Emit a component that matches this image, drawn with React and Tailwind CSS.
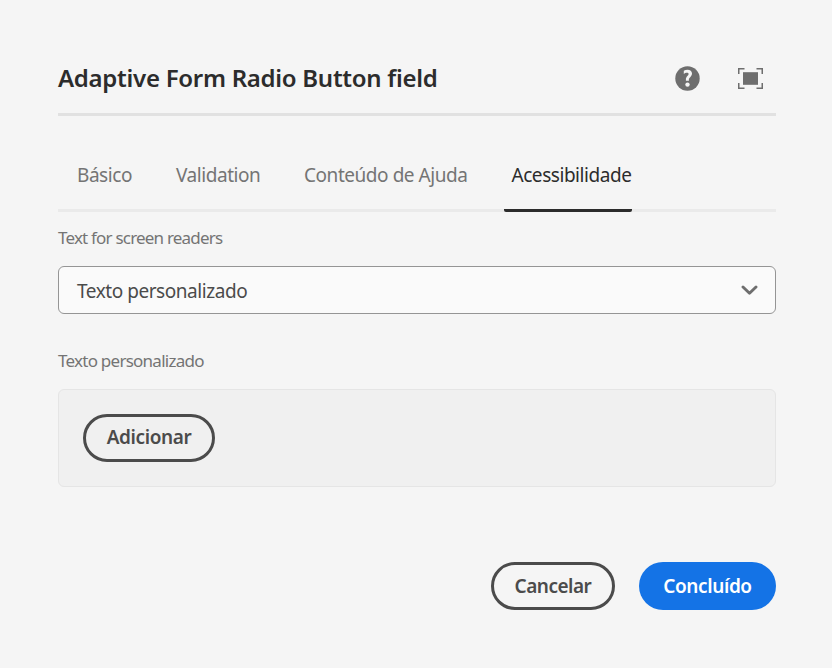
function HelpIcon() {
  return (
    <svg width="25" height="25" viewBox="0 0 25 25" aria-hidden="true">
      <circle cx="12.5" cy="12.5" r="12.2" fill="#6e6e6e" />
      <path d="M8.8 8V4.8C9.9 4.1 11.1 3.8 12.5 3.8C15.2 3.8 17 5.3 17 7.6C17 9.2 16.2 10.3 15 11.5C14.1 12.4 13.8 12.9 13.9 13.8V14.7H10.9V13.6C10.8 12.2 11.4 11.2 12.4 10.1C13.2 9.3 13.6 8.8 13.6 8.1C13.6 7.3 13 6.8 11.9 6.8C10.7 6.8 9.6 7.3 8.8 8Z" fill="#f5f5f5" />
      <circle cx="12.5" cy="18.6" r="2.2" fill="#f5f5f5" />
    </svg>
  );
}

function FullscreenIcon() {
  return (
    <svg width="25" height="21" viewBox="0 0 25 21" fill="none" aria-hidden="true">
      <path d="M6.5 .75H.75V6M18.5 .75H24.25V6M.75 15V20.25H6.5M24.25 15V20.25H18.5" stroke="#6e6e6e" strokeWidth="1.5" />
      <rect x="5" y="4.2" width="15" height="12.6" fill="#6e6e6e" />
    </svg>
  );
}

export default function App() {
  return (
    <main className="flex h-[668px] w-[832px] flex-col bg-[#f5f5f5] pr-[56px] pl-[58px] font-['Noto_Sans',sans-serif] text-[#4b4b4b] whitespace-nowrap">
      <header className="flex h-[116px] shrink-0 items-start justify-between border-b-3 border-[#e1e1e1]">
        <h1 className="mt-[62px] text-[24px] leading-[32px] font-semibold tracking-[-0.28px] text-[#2c2c2c]">Adaptive Form Radio Button field</h1>
        <div className="mt-[66px] mr-[13px] flex items-center gap-[38px]">
          <HelpIcon />
          <FullscreenIcon />
        </div>
      </header>
      <nav className="flex h-[96px] shrink-0 border-b-3 border-[#eaeaea] pt-[43px] pl-[19px] text-[19px] leading-[32px] tracking-[-0.45px] text-[#747474]">
        <div className="w-[99px]">Básico</div>
        <div className="w-[128px]">Validation</div>
        <div className="w-[199.5px]">Conteúdo de Ajuda</div>
        <div className="h-[53px] w-[128px] rounded-[2px] border-b-3 border-[#2c2c2c] pl-[8px] text-[#2c2c2c]">Acessibilidade</div>
      </nav>
      <label className="mt-[14px] text-[17px] leading-[24px] tracking-[-0.8px] text-[#747474]">Text for screen readers</label>
      <button className="mt-[16px] flex h-[48px] shrink-0 items-center justify-between rounded-[6px] border border-[#959595] bg-[#fafafa] pr-[17px] pl-[18px] text-[19px] tracking-[-0.45px]">
        <span className="pt-[2px]">Texto personalizado</span>
        <svg width="17" height="10" viewBox="0 0 17 10" fill="none" aria-hidden="true">
          <path d="M2 2L8.5 8.3L15 2" stroke="#6e6e6e" strokeWidth="2.9" strokeLinecap="round" strokeLinejoin="round" />
        </svg>
      </button>
      <label className="mt-[35px] text-[17px] leading-[24px] tracking-[-0.75px] text-[#747474]">Texto personalizado</label>
      <section className="mt-[16px] h-[98px] shrink-0 rounded-[6px] border border-[#e5e5e5] bg-[#f0f0f0] pt-[24px] pl-[24px]">
        <button className="flex h-[48px] w-[132px] items-center justify-center rounded-full border-3 border-[#4b4b4b] pb-[2px] text-[19px] font-semibold tracking-[-0.4px]">Adicionar</button>
      </section>
      <footer className="mt-[75px] flex justify-end gap-[24px] text-[19px] font-semibold tracking-[-0.5px]">
        <button className="flex h-[48px] w-[124px] items-center justify-center rounded-full border-3 border-[#4b4b4b]">Cancelar</button>
        <button className="flex h-[48px] w-[137px] items-center justify-center rounded-full bg-[#1473e6] tracking-[-0.4px] text-white">Concluído</button>
      </footer>
    </main>
  );
}
